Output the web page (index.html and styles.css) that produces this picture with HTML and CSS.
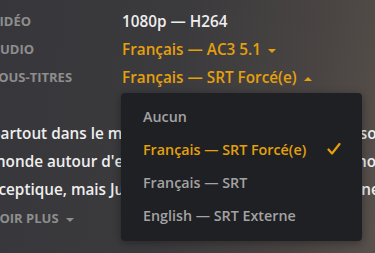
FILE: index.html
```html
<!DOCTYPE html>
<html lang="fr">

<head>
    <meta charset="UTF-8" />
    <meta name="viewport" content="width=device-width, initial-scale=1.0" />
    <title>Détails du média</title>
    <link rel="stylesheet" href="styles.css">
</head>

<body>
    <div class="details">
        <div class="infos">
            <span class="label">Vidéo</span>
            <span class="value">1080p — H264</span>

            <span class="label">Audio</span>
            <span class="value choix">Français — AC3 5.1<span class="caret"></span></span>

            <span class="label">Sous-titres</span>
            <span class="value choix ouvert">Français — SRT Forcé(e)<span class="caret haut"></span>
                <ul class="menu">
                    <li>Aucun</li>
                    <li class="actif">Français — SRT Forcé(e)
                        <svg class="coche" width="14" height="12" viewBox="0 0 14 12">
                            <polyline points="1.5,6.5 5,10.5 12.5,1" fill="none" stroke="currentColor" stroke-width="2.2" stroke-linecap="round" stroke-linejoin="round" />
                        </svg>
                    </li>
                    <li>Français — SRT</li>
                    <li>English — SRT Externe</li>
                </ul>
            </span>
        </div>

        <p class="resume">
            partout dans le monde pour trouver des histoires sombres<br>
            monde autour d'elle semble figé depuis toujours, non<br>
            sceptique, mais Julien finit par le suivre jusqu'à Gênes
        </p>

        <button type="button" class="voirPlus">Voir plus<span class="caret"></span></button>
    </div>
</body>

</html>
```

FILE: styles.css
```css
:root {
    --jaune: #e5a00d;
    --texte: #eeeeee;
    --gris: #8e8e8e;
    --menu-bg: #1f2023;
}

body {
    margin: 0;
    height: 253px;
    overflow: hidden;
    font-family: "Open Sans", Arial, sans-serif;
    background: linear-gradient(100deg, #37373b 0%, #3b3a3d 45%, #4a4543 80%, #58504c 100%);
    color: var(--texte);
}

.details {
    margin-left: -9px;
    padding-top: 7px;
}

.infos {
    display: grid;
    grid-template-columns: 131px auto;
    grid-auto-rows: 28px;
    align-items: center;
}

.label {
    font-size: 13px;
    font-weight: 700;
    text-transform: uppercase;
    color: var(--gris);
}

.value {
    font-size: 15.3px;
    font-weight: 600;
    white-space: nowrap;
}

.choix {
    color: var(--jaune);
}

.ouvert {
    position: relative;
    z-index: 1;
}

.caret {
    display: inline-block;
    width: 0;
    height: 0;
    margin-left: 7px;
    vertical-align: middle;
    border-left: 4px solid transparent;
    border-right: 4px solid transparent;
    border-top: 4px solid currentColor;
}

.caret.haut {
    border-top: none;
    border-bottom: 4px solid currentColor;
}

.resume {
    margin: 28px 0 0;
    width: 384px;
    overflow: hidden;
    font-size: 15.3px;
    font-weight: 600;
    line-height: 28px;
    white-space: nowrap;
}

.voirPlus {
    margin-top: 5px;
    padding: 0;
    border: none;
    background: none;
    font-family: inherit;
    font-size: 13px;
    font-weight: 700;
    line-height: 20px;
    text-transform: uppercase;
    color: var(--gris);
    cursor: pointer;
}

.voirPlus .caret {
    margin-left: 7px;
}

.menu {
    position: absolute;
    left: -1px;
    top: 26px;
    width: 241px;
    height: 148px;
    box-sizing: border-box;
    margin: 0;
    padding: 7px 0 9px;
    list-style: none;
    background: var(--menu-bg);
    border-radius: 4px;
    box-shadow: 0 2px 10px rgba(0, 0, 0, 0.35);
}

.menu li {
    position: relative;
    height: 33px;
    line-height: 33px;
    padding-left: 22px;
    font-size: 14.3px;
    font-weight: 600;
    color: #a3a3a3;
}

.menu li.actif {
    color: var(--jaune);
}

.coche {
    position: absolute;
    left: 206px;
    top: 10px;
}
```
